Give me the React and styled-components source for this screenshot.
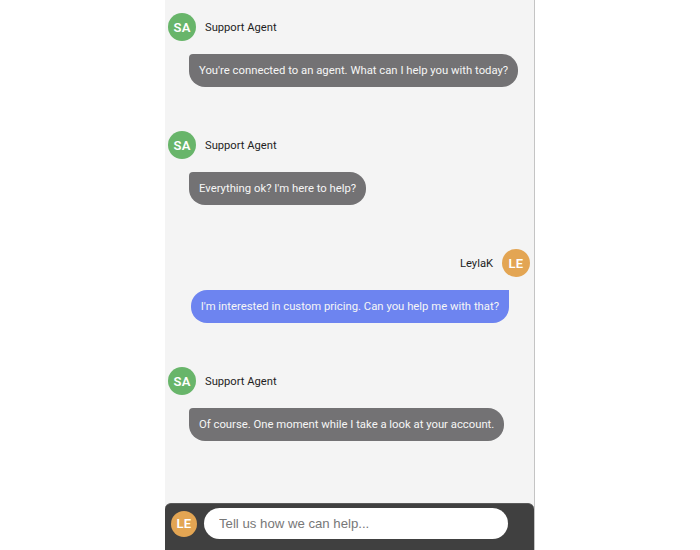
import React from "react";
import styled, { createGlobalStyle } from "styled-components";

const Global = createGlobalStyle`
  html, body { margin: 0; padding: 0; background: #ffffff; }
  body { font-family: Roboto, "Noto Sans", sans-serif; }
  * { box-sizing: border-box; }
`;

const Page = styled.div`
  width: 700px;
  height: 550px;
  display: flex;
  padding-left: 165px;
`;

const Panel = styled.div`
  width: 370px;
  height: 550px;
  background: #f4f4f4;
  border-right: 1px solid #c4c4c4;
  display: flex;
  flex-direction: column;
`;

const Messages = styled.div`
  flex: 1;
  overflow: hidden;
  padding: 13px 4px 0 3px;
  display: flex;
  flex-direction: column;
`;

const Block = styled.div`
  display: flex;
  flex-direction: column;
  align-items: ${(p) => (p.$mine ? "flex-end" : "flex-start")};
  margin-bottom: 44px;
`;

const Header = styled.div`
  display: flex;
  align-items: center;
  gap: 9px;
  flex-direction: ${(p) => (p.$mine ? "row-reverse" : "row")};
`;

const Avatar = styled.div`
  width: ${(p) => p.$size || 28}px;
  height: ${(p) => p.$size || 28}px;
  border-radius: 50%;
  background: ${(p) => p.$color};
  color: #ffffff;
  display: flex;
  align-items: center;
  justify-content: center;
  font-size: 13px;
  font-weight: 600;
  letter-spacing: 0.3px;
  flex-shrink: 0;
`;

const Name = styled.span`
  font-size: 11.2px;
  color: #1e1e1e;
`;

const Bubble = styled.div`
  margin-top: 13px;
  margin-left: ${(p) => (p.$mine ? 0 : 21)}px;
  margin-right: ${(p) => (p.$mine ? 21 : 0)}px;
  background: ${(p) => (p.$mine ? "#6d84f0" : "#737274")};
  color: #f6f6f6;
  font-size: 11.3px;
  line-height: 15px;
  padding: 9px 10px;
  border-radius: ${(p) => (p.$mine ? "16px 0 16px 16px" : "4px 16px 16px 16px")};
  white-space: nowrap;
`;

const Composer = styled.div`
  height: 47px;
  background: #404040;
  border-radius: 6px 6px 0 0;
  border-top: 1px solid #5a5a5a;
  display: flex;
  align-items: center;
  gap: 7px;
  padding: 4px 26px 11px 6px;
`;

const Input = styled.input`
  flex: 1;
  height: 31px;
  border: none;
  border-radius: 16px;
  background: #ffffff;
  padding: 0 15px;
  font-family: "Liberation Sans", Arial, sans-serif;
  font-size: 13.2px;
  color: #333;
  outline: none;
  &::placeholder { color: #777777; }
`;

const messages = [
  { mine: false, name: "Support Agent", text: "You're connected to an agent. What can I help you with today?" },
  { mine: false, name: "Support Agent", text: "Everything ok? I'm here to help?" },
  { mine: true, name: "LeylaK", text: "I'm interested in custom pricing. Can you help me with that?" },
  { mine: false, name: "Support Agent", text: "Of course. One moment while I take a look at your account." },
];

export default function App() {
  return (
    <Page>
      <Global />
      <Panel>
        <Messages>
          {messages.map((m, i) => (
            <Block key={i} $mine={m.mine}>
              <Header $mine={m.mine}>
                <Avatar $color={m.mine ? "#e3a553" : "#68b56a"}>{m.mine ? "LE" : "SA"}</Avatar>
                <Name>{m.name}</Name>
              </Header>
              <Bubble $mine={m.mine}>{m.text}</Bubble>
            </Block>
          ))}
        </Messages>
        <Composer>
          <Avatar $size={26} $color="#e3a553">LE</Avatar>
          <Input placeholder="Tell us how we can help..." />
        </Composer>
      </Panel>
    </Page>
  );
}
